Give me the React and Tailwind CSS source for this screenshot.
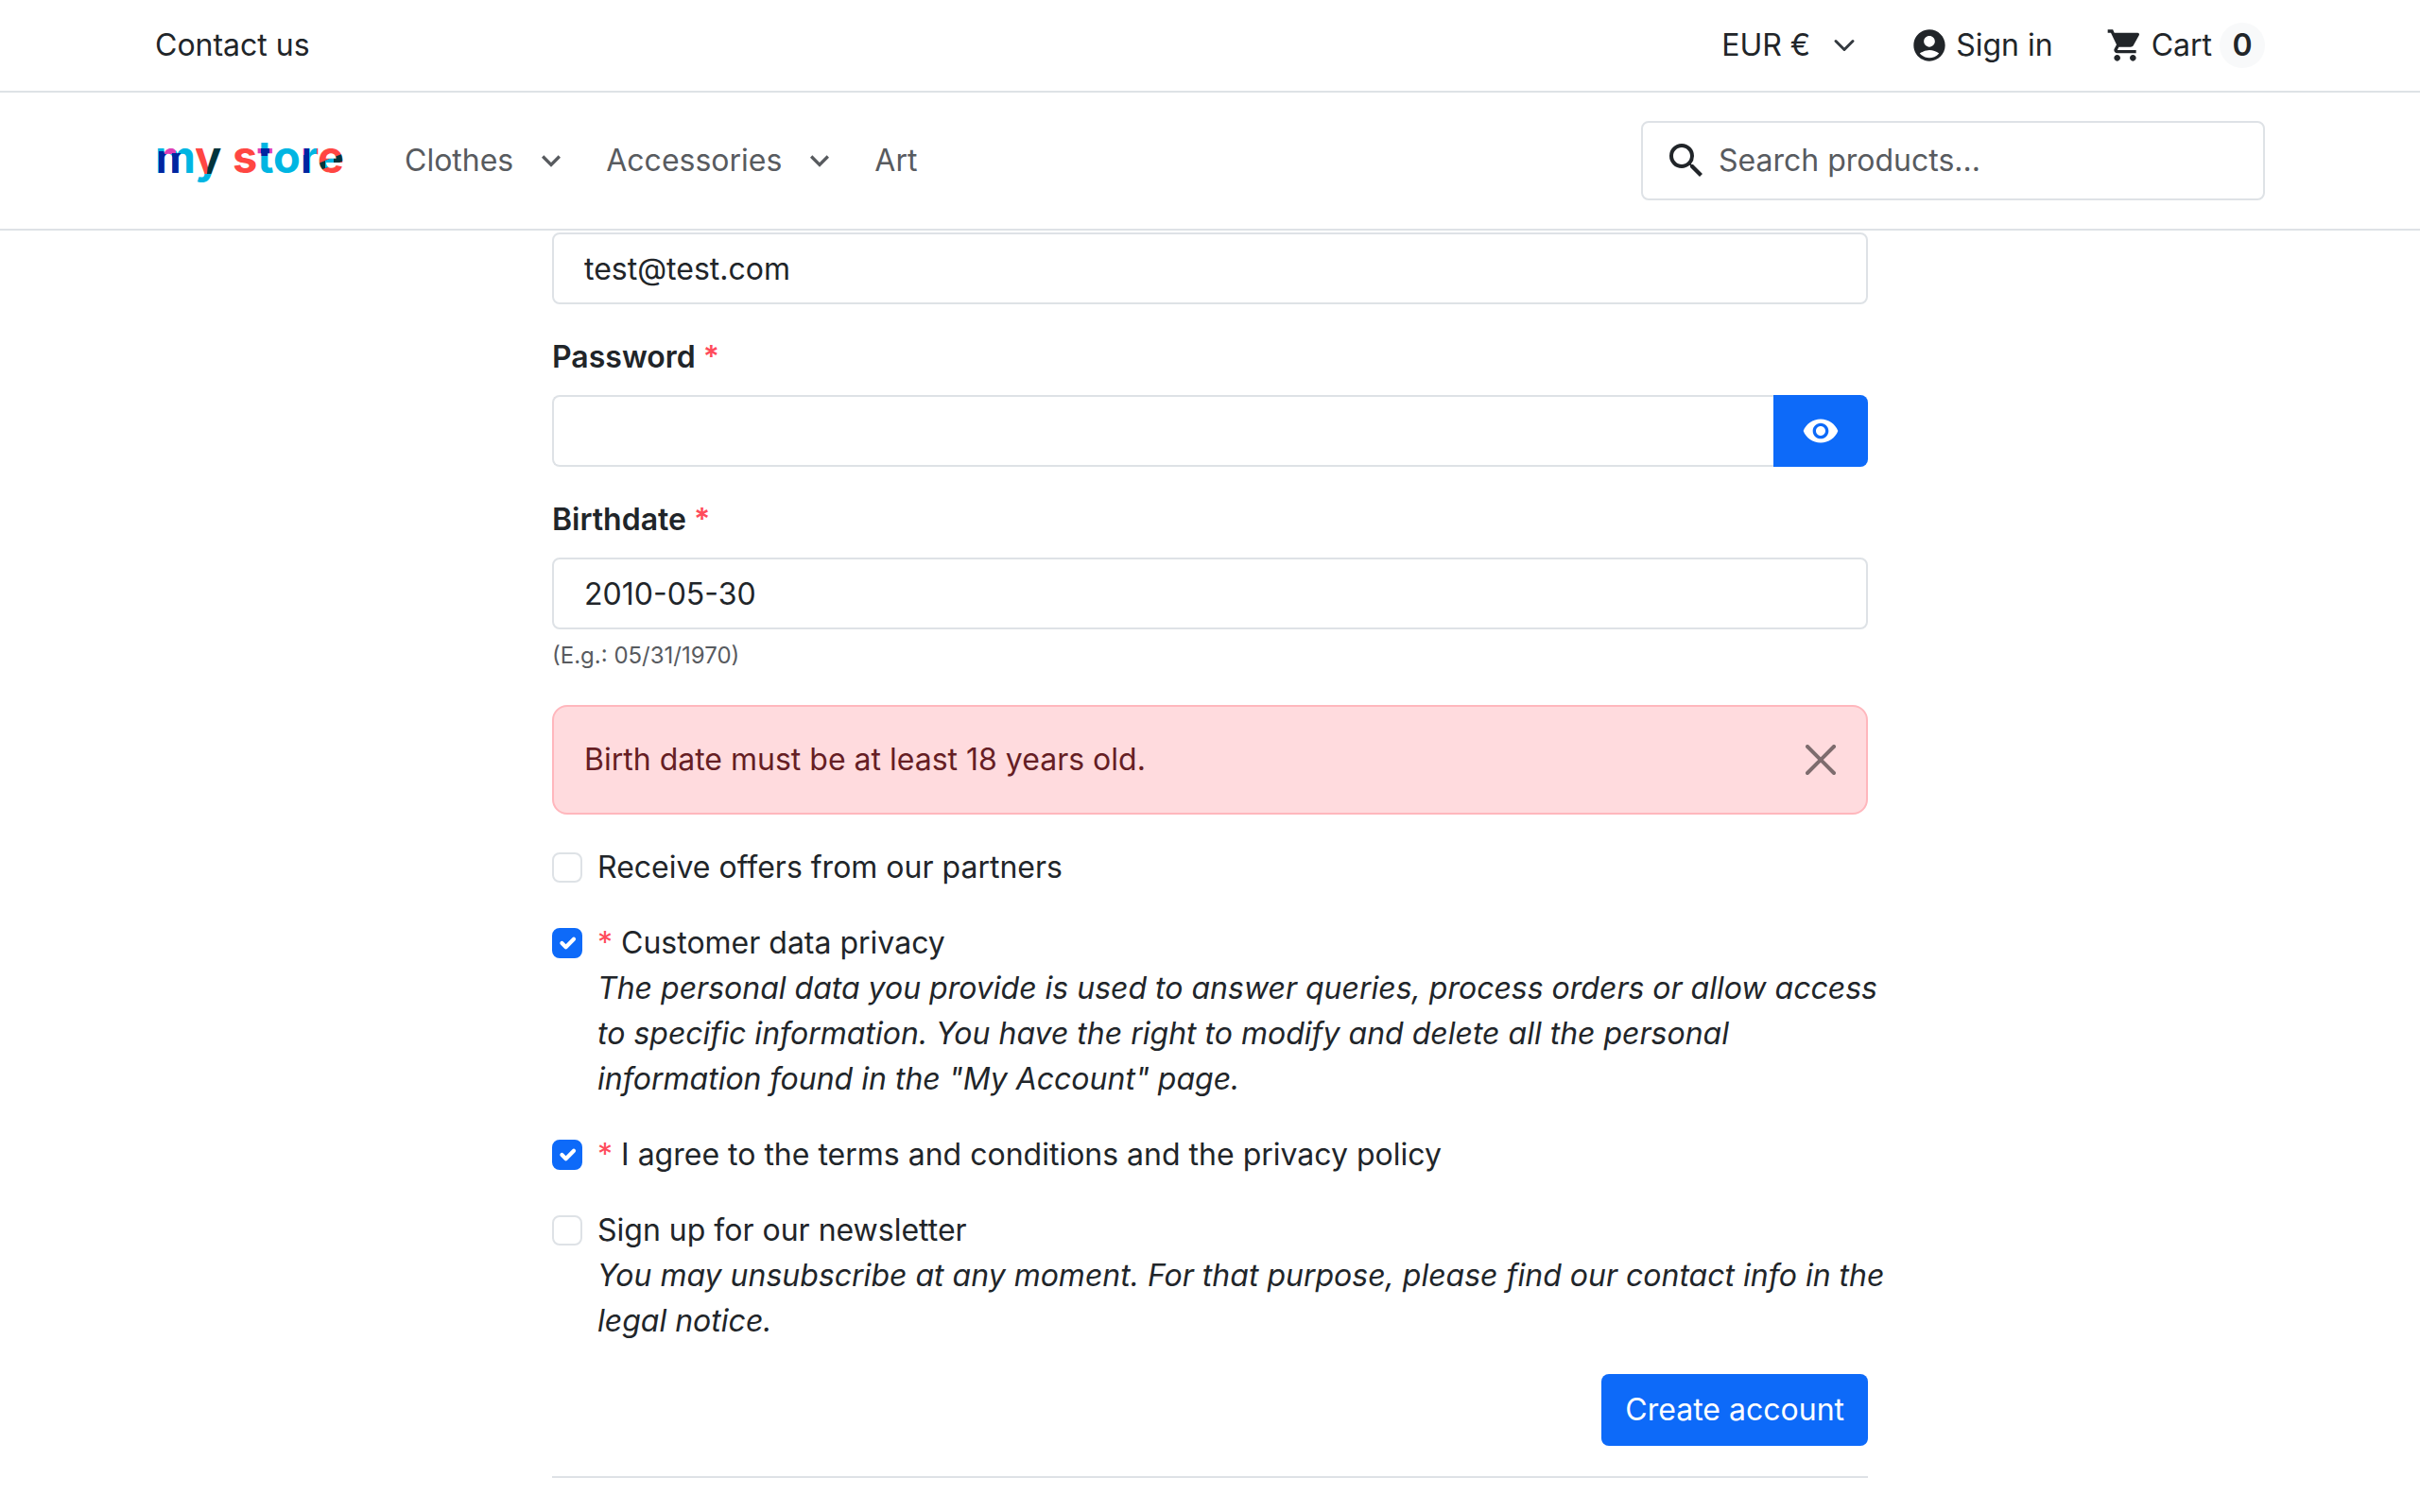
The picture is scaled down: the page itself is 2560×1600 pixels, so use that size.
import { useState } from 'react';
import { MdAccountCircle, MdExpandMore, MdSearch, MdShoppingCart, MdVisibility } from 'react-icons/md';

const MENU = [
  { label: 'Clothes', hasChildren: true },
  { label: 'Accessories', hasChildren: true },
  { label: 'Art', hasChildren: false },
];

const CONSENTS = [
  { id: 'optin', label: 'Receive offers from our partners' },
  {
    id: 'customer_privacy',
    label: 'Customer data privacy',
    note: 'The personal data you provide is used to answer queries, process orders or allow access to specific information. You have the right to modify and delete all the personal information found in the "My Account" page.',
    required: true,
    checked: true,
  },
  {
    id: 'psgdpr',
    label: 'I agree to the terms and conditions and the privacy policy',
    required: true,
    checked: true,
  },
  {
    id: 'newsletter',
    label: 'Sign up for our newsletter',
    note: 'You may unsubscribe at any moment. For that purpose, please find our contact info in the legal notice.',
  },
];

const inputClass =
  'block h-[76px] w-full min-w-0 rounded-lg border-2 border-[#dee2e6] bg-white px-8 text-[#212529] focus:outline-none focus:border-[#86b7fe]';

function Logo() {
  return (
    <svg viewBox="0 0 200 72" className="h-[72px] w-[200px]" role="img" aria-label="my store">
      <defs>
        {/* colour patches that show through the letters */}
        <pattern id="logo-colors" patternUnits="userSpaceOnUse" width="200" height="72">
          <rect width="200" height="72" fill="#00b5e2" />
          <rect x="4" y="26" width="9" height="26" fill="#0025a0" />
          <rect x="10" y="20" width="12" height="9" fill="#dd3fb5" />
          <rect x="18" y="28" width="9" height="24" fill="#0025a0" />
          <rect x="43" y="20" width="15" height="30" fill="#ff4642" />
          <path d="M58 20h14v12l-8 18h-9z" fill="#02343c" />
          <rect x="82" y="20" width="26" height="34" fill="#ff4642" />
          <rect x="108" y="23" width="18" height="8" fill="#0025a0" />
          <rect x="108" y="23" width="4" height="8" fill="#dd3fb5" />
          <rect x="121" y="23" width="5" height="8" fill="#dd3fb5" />
          <rect x="153" y="20" width="10" height="34" fill="#0025a0" />
          <rect x="153" y="20" width="5" height="10" fill="#dd3fb5" />
          <rect x="171" y="20" width="29" height="34" fill="#ff4642" />
          <path d="M170 40l30-12v8l-30 12z" fill="#02343c" />
          <path d="M180 36l9-4v8l-9 4z" fill="#00b5e2" />
        </pattern>
      </defs>
      <g fill="url(#logo-colors)" fontFamily="Inter, sans-serif" fontWeight="700" fontSize="47">
        <text x="0" y="49">my</text>
        <text x="82" y="49">store</text>
      </g>
    </svg>
  );
}

function Header() {
  return (
    <header className="sticky top-0 z-10 bg-white">
      <div className="border-b-2 border-[#dee2e6]">
        <div className="mx-auto flex h-24 max-w-[2280px] items-center justify-between px-6">
          <a href="#contact">Contact us</a>
          <div className="flex items-center gap-14">
            <div className="grid items-center">
              <select
                aria-label="Currency"
                className="col-start-1 row-start-1 w-36 appearance-none bg-transparent focus:outline-none"
              >
                <option>EUR €</option>
              </select>
              <svg
                viewBox="0 0 16 16"
                className="pointer-events-none col-start-1 row-start-1 mr-0.5 size-6 justify-self-end"
                fill="none"
                stroke="#343a40"
                strokeWidth="2"
                strokeLinecap="round"
                strokeLinejoin="round"
              >
                <path d="m2 5 6 6 6-6" />
              </svg>
            </div>
            <a href="#login" className="flex items-center gap-2">
              <MdAccountCircle size={40} />
              Sign in
            </a>
            <a href="#cart" className="flex items-center gap-2">
              <MdShoppingCart size={40} />
              Cart
              <span className="flex size-12 items-center justify-center rounded-full bg-[#f8f9fa] font-semibold">0</span>
            </a>
          </div>
        </div>
      </div>

      <div className="border-b-2 border-[#dee2e6]">
        <div className="mx-auto flex h-36 max-w-[2280px] items-center px-6">
          <a href="#home">
            <Logo />
          </a>
          <nav className="ml-16 flex items-center gap-[38px] text-[#585b5f]">
            {MENU.map((item) => (
              <a key={item.label} href={`#${item.label.toLowerCase()}`} className="flex items-center gap-5">
                {item.label}
                {item.hasChildren && <MdExpandMore size={40} />}
              </a>
            ))}
          </nav>
          <form className="ml-auto flex h-[84px] w-[660px] items-center gap-2.5 rounded-lg border-2 border-[#dee2e6] pr-6 pl-[22px]">
            <MdSearch size={48} className="shrink-0" />
            <input
              type="search"
              aria-label="Search"
              placeholder="Search products..."
              className="w-full min-w-0 bg-transparent placeholder:text-[#585b5f] focus:outline-none"
            />
          </form>
        </div>
      </div>
    </header>
  );
}

function Field({ id, label, children }) {
  return (
    <div>
      <label htmlFor={id} className="mb-4 block font-semibold">
        {label} <span className="text-[#ff4c5b]">*</span>
      </label>
      {children}
    </div>
  );
}

function Consent({ id, label, note, required, checked }) {
  return (
    <div className="flex items-start gap-4">
      <span className="grid h-12 shrink-0 place-items-center">
        <input
          id={id}
          type="checkbox"
          defaultChecked={checked}
          className="peer col-start-1 row-start-1 size-8 appearance-none rounded-lg border-2 border-[#dee2e6] bg-white checked:border-[#0d6af9] checked:bg-[#0d6af9]"
        />
        <svg
          viewBox="0 0 20 20"
          className="pointer-events-none invisible col-start-1 row-start-1 size-7 peer-checked:visible"
          fill="none"
          stroke="#fff"
          strokeWidth="3"
          strokeLinecap="round"
          strokeLinejoin="round"
        >
          <path d="m6 10 3 3 6-6" />
        </svg>
      </span>
      <label htmlFor={id} className="-mr-6">
        {required && <span className="text-[#ff4c5b]">* </span>}
        {label}
        {note && <em className="block">{note}</em>}
      </label>
    </div>
  );
}

export default function App() {
  const [showPassword, setShowPassword] = useState(false);
  const [showAlert, setShowAlert] = useState(true);

  return (
    <div className="min-h-screen bg-white font-[Inter,sans-serif] text-[32px] leading-[48px] text-[#212529]">
      <Header />

      <main className="mx-auto w-full max-w-[1392px] pt-0.5">
        <form className="flex flex-col gap-8" onSubmit={(e) => e.preventDefault()}>
          <input type="email" aria-label="Email" defaultValue="test@test.com" className={inputClass} />

          <Field id="password" label="Password">
            <div className="flex">
              <input
                id="password"
                type={showPassword ? 'text' : 'password'}
                className={`${inputClass} rounded-r-none border-r-0`}
              />
              <button
                type="button"
                aria-label="Show password"
                onClick={() => setShowPassword(!showPassword)}
                className="flex w-[100px] shrink-0 items-center justify-center rounded-r-lg bg-[#0d6af9] text-white"
              >
                <MdVisibility size={40} />
              </button>
            </div>
          </Field>

          <Field id="birthday" label="Birthdate">
            <input id="birthday" type="text" defaultValue="2010-05-30" className={inputClass} />
            <p className="mt-2 text-2xl leading-10 text-[#585b5f]">(E.g.: 05/31/1970)</p>
          </Field>

          {showAlert && (
            <div
              role="alert"
              className="flex items-center justify-between rounded-2xl border-2 border-[#ffb7bd] bg-[#ffdbde] p-8 text-[#661e24]"
            >
              Birth date must be at least 18 years old.
              <button type="button" aria-label="Close" onClick={() => setShowAlert(false)} className="text-black opacity-50">
                <svg viewBox="0 0 16 16" className="size-8" fill="currentColor">
                  <path d="M.293.293a1 1 0 0 1 1.414 0L8 6.586 14.293.293a1 1 0 1 1 1.414 1.414L9.414 8l6.293 6.293a1 1 0 0 1-1.414 1.414L8 9.414l-6.293 6.293a1 1 0 0 1-1.414-1.414L6.586 8 .293 1.707a1 1 0 0 1 0-1.414z" />
                </svg>
              </button>
            </div>
          )}

          {CONSENTS.map((consent) => (
            <Consent key={consent.id} {...consent} />
          ))}

          <button type="submit" className="h-[76px] self-end rounded-lg bg-[#0d6af9] px-[25px] text-white">
            Create account
          </button>

          <hr className="border-t-2 border-[#dee2e6]" />
        </form>
      </main>
    </div>
  );
}
